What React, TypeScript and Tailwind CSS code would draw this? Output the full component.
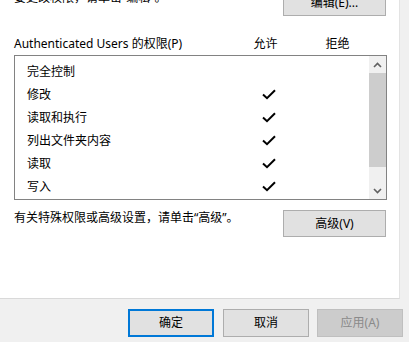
const font = { fontFamily: '"Noto Sans", "Noto Sans CJK SC", sans-serif' };

const perms: { name: string; allow: boolean }[] = [
  { name: "完全控制", allow: false },
  { name: "修改", allow: true },
  { name: "读取和执行", allow: true },
  { name: "列出文件夹内容", allow: true },
  { name: "读取", allow: true },
  { name: "写入", allow: true },
];

function Check() {
  return (
    <svg width="14" height="11" viewBox="0 0 14 11" className="block">
      <polyline points="1,5.5 5,9.2 13,1.2" fill="none" stroke="#000" strokeWidth="2" />
    </svg>
  );
}

function Chevron({ down }: { down?: boolean }) {
  return (
    <svg width="9" height="6" viewBox="0 0 9 6" className="block">
      <polyline
        points={down ? "1,1 4.5,4.5 8,1" : "1,5 4.5,1.5 8,5"}
        fill="none"
        stroke="#606060"
        strokeWidth="1.6"
      />
    </svg>
  );
}

function WinButton({
  label,
  width,
  height,
  variant = "normal",
  className = "",
}: {
  label: string;
  width: string;
  height: string;
  variant?: "normal" | "default" | "disabled";
  className?: string;
}) {
  const look =
    variant === "default"
      ? "border-2 border-[#0078d7] bg-[#e1e1e1] text-black"
      : variant === "disabled"
        ? "border border-[#bfbfbf] bg-[#cccccc] text-[#8a8a8a]"
        : "border border-[#adadad] bg-[#e1e1e1] text-black";
  return (
    <div
      className={`flex shrink-0 items-center justify-center text-[12px] leading-[16px] ${width} ${height} ${look} ${className}`}
    >
      {label}
    </div>
  );
}

export default function App() {
  return (
    <div className="flex h-[342px] w-[409px] flex-col bg-[#f0f0f0] text-black" style={font}>
      <div className="flex">
        <div className="h-[299px] w-[400px] overflow-hidden border-r border-b border-r-[#e3e3e3] border-b-[#d9d9d9] bg-white pl-[14px]">
          <div className="-mt-[11px] flex h-[27px] items-start">
            <span className="mt-[1px] w-[269px] text-[12px] leading-[16px]">要更改权限，请单击“编辑”。</span>
            <WinButton label="编辑(E)..." width="w-[103px]" height="h-[27px]" />
          </div>

          <div className="mt-[20px] flex text-[12px] leading-[16px]">
            <span className="w-[239px]">Authenticated Users 的权限(P)</span>
            <span className="w-[25px] text-center">允许</span>
            <span className="ml-[47px] w-[25px] text-center">拒绝</span>
          </div>

          <div className="mt-[3px] flex h-[145px] w-[373px] border border-[#828282]">
            <div className="flex-1 pt-[4px]">
              {perms.map((p) => (
                <div key={p.name} className="flex h-[23px] items-center pl-[12px] text-[12px] leading-[16px]">
                  <span className="w-[235px]">{p.name}</span>
                  {p.allow && <Check />}
                </div>
              ))}
            </div>
            <div className="flex w-[17px] flex-col bg-[#f0f0f0]">
              <div className="flex h-[17px] items-center justify-center">
                <Chevron />
              </div>
              <div className="h-[94px] bg-[#cdcdcd]" />
              <div className="flex-1" />
              <div className="flex h-[17px] items-center justify-center">
                <Chevron down />
              </div>
            </div>
          </div>

          <div className="mt-[10px] flex items-start">
            <span className="w-[269px] text-[12px] leading-[16px]">有关特殊权限或高级设置，请单击“高级”。</span>
            <WinButton label="高级(V)" width="w-[103px]" height="h-[27px]" />
          </div>
        </div>
      </div>

      <div className="flex pt-[10px] pl-[128px]">
        <WinButton label="确定" width="w-[86px]" height="h-[28px]" variant="default" />
        <WinButton label="取消" width="w-[86px]" height="h-[28px]" className="ml-[9px]" />
        <WinButton label="应用(A)" width="w-[86px]" height="h-[28px]" variant="disabled" className="ml-[8px]" />
      </div>
    </div>
  );
}
